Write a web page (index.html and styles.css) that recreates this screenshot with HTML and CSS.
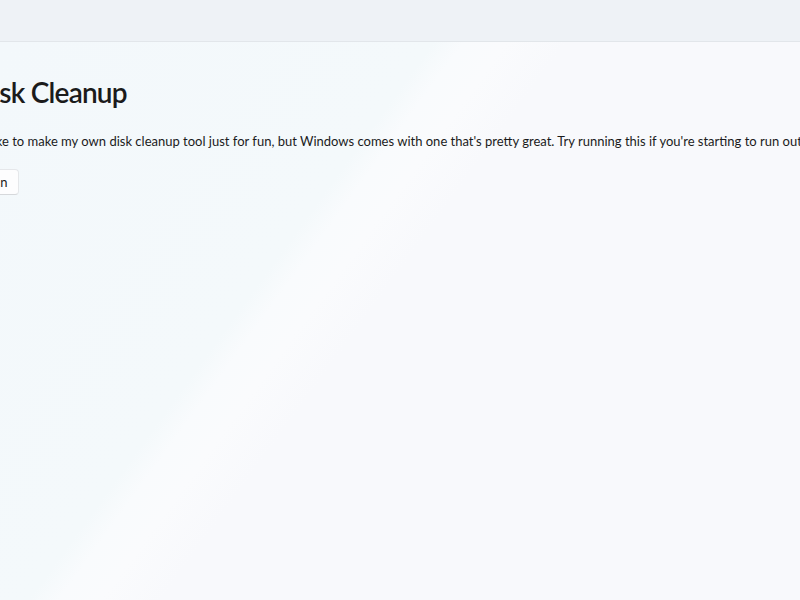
FILE: index.html
```html
<!DOCTYPE html>
<html lang="en">

<head>
    <meta charset="UTF-8">
    <meta name="viewport" content="width=device-width, initial-scale=1.0">
    <title>Disk Cleanup</title>
    <link rel="stylesheet" href="styles.css">
</head>

<body>
    <!-- Title bar -->
    <div class="titlebar"></div>

    <!-- Page -->
    <div class="page">
        <div class="content">
            <h1 class="title">Disk Cleanup</h1>
            <p class="desc">I'd like to make my own disk cleanup tool just for fun, but Windows comes with one that's pretty great. Try running this if you're starting to run out of space.</p>
            <button class="btn">Run</button>
        </div>
    </div>
</body>

</html>
```

FILE: styles.css
```css
html,
body {
    margin: 0;
    height: 100%;
}

body {
    display: flex;
    flex-direction: column;
    font-family: Lato, "Noto Sans", sans-serif;
    color: #1b1b1b;
    background-color: #f5f8fb;
    overflow: hidden;
}

.titlebar {
    height: 41px;
    flex-shrink: 0;
    background-color: #eef2f6;
    border-bottom: 1px solid #e2e6ea;
}

.page {
    flex: 1;
    background: linear-gradient(126deg,
            #f3f8fb 0%,
            #f4f9fb 36%,
            #f9fbfd 38.5%,
            #fafbfd 42%,
            #f8f9fc 47%,
            #f8f9fc 100%);
}

.content {
    margin-left: -27px;
    padding-top: 31px;
    white-space: nowrap;
}

.title {
    margin: 0;
    font-size: 28px;
    font-weight: 600;
    line-height: 38px;
    letter-spacing: -0.8px;
}

.desc {
    margin: 20px 0 18px;
    font-size: 13px;
    line-height: 20px;
}

.btn {
    font-family: inherit;
    font-size: 13px;
    color: #1b1b1b;
    background-color: #fdfdfe;
    border: 1px solid #e5e7ea;
    border-bottom-color: #d6d8db;
    border-radius: 4px;
    height: 26px;
    padding: 0 11px;
}
```
